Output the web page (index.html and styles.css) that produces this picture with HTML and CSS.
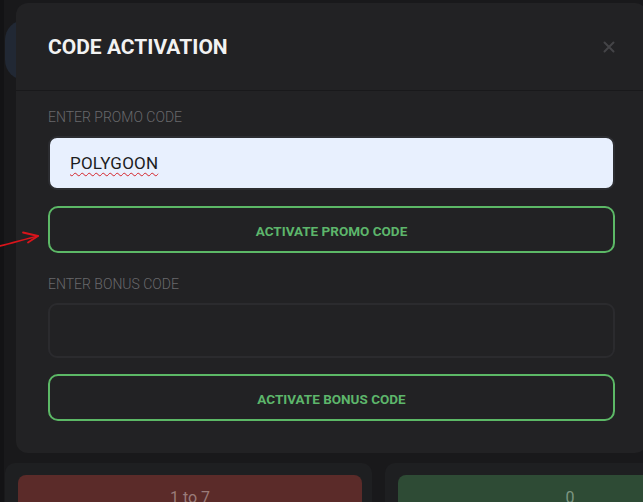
FILE: index.html
```html
<!DOCTYPE html>
<html lang="en">
<head>
<meta charset="utf-8">
<title>Code activation</title>
<link rel="stylesheet" href="styles.css">
</head>
<body>
<div class="page">
  <div class="behind-pill"></div>
  <section class="modal">
    <header class="modal-header">
      <h2 class="modal-title">CODE ACTIVATION</h2>
      <button class="close" aria-label="Close">
        <svg width="12" height="12" viewBox="0 0 12 12"><path d="M1.5 1.5 L10.5 10.5 M10.5 1.5 L1.5 10.5" stroke="#444447" stroke-width="2" stroke-linecap="round"/></svg>
      </button>
    </header>
    <div class="modal-body">
      <div class="label">ENTER PROMO CODE</div>
      <div class="field field-filled"><span class="misspelled">POLYGOON</span></div>
      <button class="activate">ACTIVATE PROMO CODE</button>
      <div class="label label-second">ENTER BONUS CODE</div>
      <div class="field field-empty"></div>
      <button class="activate">ACTIVATE BONUS CODE</button>
    </div>
  </section>
  <div class="panels">
    <div class="panel"><div class="tile tile-red">1 to 7</div></div>
    <div class="panel"><div class="tile tile-green">0</div></div>
  </div>
  <svg class="annotation" width="44" height="20" viewBox="0 0 44 20">
    <path d="M0 16 C12 13 26 9 38 6" stroke="#d9141b" stroke-width="1.8" fill="none" stroke-linecap="round"/>
    <path d="M23 2.5 L38 6 L28 12.5" stroke="#d9141b" stroke-width="1.8" fill="none" stroke-linecap="round" stroke-linejoin="round"/>
  </svg>
</div>
</body>
</html>
```
FILE: styles.css
```css
html, body {
  margin: 0;
  padding: 0;
  background: #19191b;
  overflow: hidden;
}
body {
  font-family: Roboto, "Liberation Sans", sans-serif;
  height: 502px;
}
.page {
  position: relative;
  height: 502px;
  border-left: 4px solid #131315;
  padding-top: 3px;
  box-sizing: border-box;
  width: 660px;
}
.behind-pill {
  position: absolute;
  left: 1px;
  top: 20px;
  width: 40px;
  height: 60px;
  border-radius: 22px;
  background: #212834;
}
.modal {
  position: relative;
  margin-left: 12px;
  width: 631px;
  background: #222224;
  border-radius: 12px;
}
.modal-header {
  height: 87px;
  padding: 0 32px;
  display: flex;
  align-items: center;
  justify-content: space-between;
  border-bottom: 1px solid #19191b;
}
.modal-title {
  margin: 0;
  color: #f2f2f2;
  font-size: 21px;
  font-weight: 700;
  letter-spacing: 0;
}
.close {
  background: none;
  border: 0;
  padding: 0;
  margin-right: -1px;
  width: 14px;
  height: 14px;
  display: flex;
  align-items: center;
  justify-content: center;
}
.modal-body {
  padding: 17px 32px 32px;
  display: flex;
  flex-direction: column;
}
.label {
  color: #69696c;
  font-size: 14px;
  font-weight: 300;
  line-height: 18px;
  height: 18px;
  margin-bottom: 10px;
}
.label-second {
  margin-top: 22px;
}
.field {
  height: 54px;
  border-radius: 9px;
  box-sizing: border-box;
  display: flex;
  align-items: center;
  padding-left: 20px;
}
.field-filled {
  background: #e8f0fe;
  border: 2px solid #2c2d31;
  color: #1d1d1f;
  font-size: 17px;
  font-weight: 400;
  letter-spacing: 0.2px;
}
.field-empty {
  height: 55px;
  background: #222224;
  border: 2px solid #2b2b2e;
}
.misspelled {
  text-decoration: underline wavy #d4232a;
  text-decoration-thickness: 1px;
  text-underline-offset: 3px;
}
.activate {
  margin-top: 16px;
  height: 47px;
  width: 100%;
  background: transparent;
  border: 2px solid #5cb866;
  border-radius: 10px;
  color: #5db66b;
  font-family: Roboto, "Liberation Sans", sans-serif;
  font-size: 13.5px;
  font-weight: 700;
  letter-spacing: 0;
  padding-top: 3px;
}
.panels {
  display: flex;
  gap: 13px;
  margin-top: 10px;
  margin-left: 1px;
}
.panel {
  width: 367px;
  height: 60px;
  flex: none;
  background: #1e1f21;
  border-radius: 10px;
  padding: 12px 10px 0 13px;
  box-sizing: border-box;
}
.tile {
  height: 48px;
  border-radius: 8px;
  text-align: center;
  font-size: 16px;
  line-height: 18px;
  padding-top: 14px;
  box-sizing: border-box;
}
.tile-red {
  background: #5b2b29;
  color: #9a7c7a;
}
.tile-green {
  background: #2e4b35;
  color: #7d9683;
}
.annotation {
  position: absolute;
  left: -4px;
  top: 230px;
}
```
